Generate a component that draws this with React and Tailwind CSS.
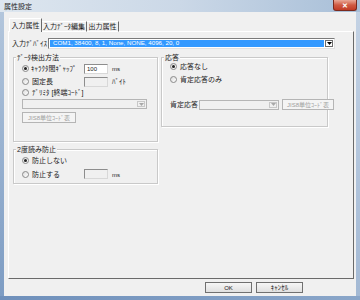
import React from "react";

function Radio({ checked }) {
  return (
    <span className="w-[7px] h-[7px] rounded-full border border-[#8a8a8a] bg-gradient-to-br from-[#dcdcdc] to-white flex items-center justify-center shrink-0">
      {checked && <span className="w-[3px] h-[3px] rounded-full bg-[#222]" />}
    </span>
  );
}

function Arrow({ disabled }) {
  return (
    <svg width="5" height="3" viewBox="0 0 5 3">
      <path d="M0 0H5L2.5 3Z" fill={disabled ? "#a8a8a8" : "#000"} />
    </svg>
  );
}

function Group({ label, className, children }) {
  return (
    <div className={"relative border border-[#c9c9c9] shadow-[inset_1px_1px_0_#fff,1px_1px_0_#fff] " + className}>
      <span className="absolute left-[2px] top-[-5px] bg-[#f0f0f0] px-[1px] leading-[9px] whitespace-nowrap">{label}</span>
      {children}
    </div>
  );
}

function DisabledCombo({ className }) {
  return (
    <div className={"flex items-stretch border border-[#b5b5b5] bg-[#f0f0f0] shrink-0 " + className}>
      <div className="flex-1" />
      <div className="w-[8px] my-[1px] mr-[1px] border border-[#c8c8c8] flex items-center justify-center">
        <Arrow disabled />
      </div>
    </div>
  );
}

function Input({ value, white, className }) {
  return (
    <div
      className={
        "w-[24px] h-[10px] shrink-0 border border-t-[#8d8d8d] border-l-[#8d8d8d] border-r-[#d8d8d8] border-b-[#d8d8d8] flex items-center pl-[2px] text-[6px] " +
        (white ? "bg-white " : "bg-[#f0f0f0] ") +
        (className || "")
      }
    >
      {value}
    </div>
  );
}

export default function App() {
  return (
    <div className="w-[360px] h-[300px] flex flex-col overflow-hidden font-['Liberation_Sans','Noto_Sans_CJK_JP',sans-serif] text-[7px] leading-none text-[#1a1a1a] bg-[#9fb6d2] whitespace-nowrap">
      {/* title bar */}
      <div className="h-[12px] flex items-start justify-between bg-gradient-to-r from-[#dde6ef] via-[#cbd8e7] to-[#a8bfd8]">
        <span className="ml-[4px] mt-[3px] text-[7px] text-[#1e1e1e]">属性設定</span>
        <div className="mr-[3px] w-[24px] h-[11px] rounded-b-[3px] bg-gradient-to-b from-[#e9a897] via-[#cf5a43] to-[#c23b25] border border-t-0 border-[#7a2a1e] flex items-center justify-center text-white text-[7px] font-bold">
          ✕
        </div>
      </div>
      <div className="flex flex-1">
        <div className="w-[4px] bg-gradient-to-b from-[#b3c6dc] to-[#7d9cc3]" />
        <div className="w-[352px] bg-[#f0f0f0] flex flex-col">
          {/* tabs */}
          <div className="flex items-end ml-[5px] mt-[6px] mb-[-1px] relative z-10">
            <div className="h-[14px] w-[33px] bg-[#f0f0f0] border-t border-l border-white border-r border-r-[#6a6a6a] flex items-center justify-center pb-[1px]">
              入力属性
            </div>
            <div className="h-[11px] w-[45px] border-t border-white border-r border-r-[#6a6a6a] border-b border-b-white flex items-center justify-center">
              入力ﾃﾞｰﾀ編集
            </div>
            <div className="h-[11px] w-[32px] border-t border-white border-r border-r-[#6a6a6a] border-b border-b-white flex items-center justify-center">
              出力属性
            </div>
          </div>
          {/* panel */}
          <div className="ml-[4px] w-[346px] h-[248px] border border-t-white border-l-white border-r-[#6a6a6a] border-b-[#6a6a6a] flex flex-col">
            <div className="mt-[6px] h-[11px] flex items-center">
              <span className="ml-[3px] w-[36px]">入力ﾃﾞﾊﾞｲｽ</span>
              <div className="w-[287px] h-[11px] flex border border-t-[#7a7a7a] border-l-[#7a7a7a] border-r-[#e0e0e0] border-b-[#e0e0e0] bg-white">
                <div className="flex-1 bg-[#3399ff] my-[1px] ml-[1px] text-white text-[6.2px] flex items-center pl-[3px]">
                  COM1, 38400, 8, 1, None, NONE, 4096, 20, 0
                </div>
                <div className="w-[8px] my-[1px] mr-[1px] ml-[1px] border border-[#6a6a6a] bg-white flex items-center justify-center">
                  <Arrow />
                </div>
              </div>
            </div>
            <div className="mt-[8px] ml-[4px] flex items-start gap-[3px]">
              <Group label="ﾃﾞｰﾀ検出方法" className="w-[145px] h-[85px]">
                <div className="flex flex-col pl-[8px]">
                  <div className="mt-[5px] h-[11px] flex items-center">
                    <div className="w-[62px] flex items-center gap-[2px]">
                      <Radio checked />
                      <span>ｷｬﾗｸﾀ間ｷﾞｬｯﾌﾟ</span>
                    </div>
                    <Input value="100" white />
                    <span className="ml-[4px] text-[6px]">ms</span>
                  </div>
                  <div className="mt-[2px] h-[11px] flex items-center">
                    <div className="w-[62px] flex items-center gap-[3px]">
                      <Radio />
                      <span>固定長</span>
                    </div>
                    <Input />
                    <span className="ml-[4px]">ﾊﾞｲﾄ</span>
                  </div>
                  <div className="mt-[1px] h-[9px] flex items-center gap-[3px]">
                    <Radio />
                    <span>ﾃﾞﾘﾐﾀ [終端ｺｰﾄﾞ]</span>
                  </div>
                  <DisabledCombo className="mt-[2px] w-[125px] h-[10px]" />
                  <div className="mt-[3px] w-[54px] h-[11px] border border-[#b5b5b5] bg-[#f4f4f4] flex items-center justify-center text-[#a0a0a0] text-[6px]">
                    JIS8単位ｺｰﾄﾞ表
                  </div>
                </div>
              </Group>
              <Group label="応答" className="w-[167px] h-[70px]">
                <div className="flex flex-col pl-[8px]">
                  <div className="mt-[4px] h-[9px] flex items-center gap-[3px]">
                    <Radio checked />
                    <span>応答なし</span>
                  </div>
                  <div className="mt-[4px] h-[9px] flex items-center gap-[3px]">
                    <Radio />
                    <span>肯定応答のみ</span>
                  </div>
                  <div className="mt-[15px] h-[11px] flex items-center">
                    <span className="w-[29px] shrink-0">肯定応答</span>
                    <DisabledCombo className="w-[80px] h-[10px]" />
                    <div className="ml-[3px] w-[52px] h-[11px] shrink-0 border border-[#b5b5b5] bg-[#f4f4f4] flex items-center justify-center text-[#a0a0a0] text-[6px]">
                      JIS8単位ｺｰﾄﾞ表
                    </div>
                  </div>
                </div>
              </Group>
            </div>
            <Group label="2度読み防止" className="mt-[7px] ml-[4px] w-[145px] h-[35px]">
              <div className="flex flex-col pl-[8px]">
                <div className="mt-[6px] h-[9px] flex items-center gap-[3px]">
                  <Radio checked />
                  <span>防止しない</span>
                </div>
                <div className="mt-[4px] h-[10px] flex items-center">
                  <div className="w-[62px] flex items-center gap-[3px]">
                    <Radio />
                    <span>防止する</span>
                  </div>
                  <Input />
                  <span className="ml-[4px] mt-[2px] text-[6px]">ms</span>
                </div>
              </div>
            </Group>
          </div>
          {/* buttons */}
          <div className="mt-[3px] flex justify-end gap-[4px] mr-[53px]">
            <div className="w-[47px] h-[11px] border border-[#707070] bg-gradient-to-b from-[#f6f6f6] to-[#e0e0e0] flex items-center justify-center text-[6px]">
              OK
            </div>
            <div className="w-[47px] h-[11px] border border-[#707070] bg-gradient-to-b from-[#f6f6f6] to-[#e0e0e0] flex items-center justify-center">
              ｷｬﾝｾﾙ
            </div>
          </div>
        </div>
        <div className="w-[4px] bg-gradient-to-b from-[#c3d2e4] to-[#a3b9d4]" />
      </div>
      <div className="h-[4px] bg-gradient-to-r from-[#6f90bb] to-[#8aa6c9]" />
    </div>
  );
}
